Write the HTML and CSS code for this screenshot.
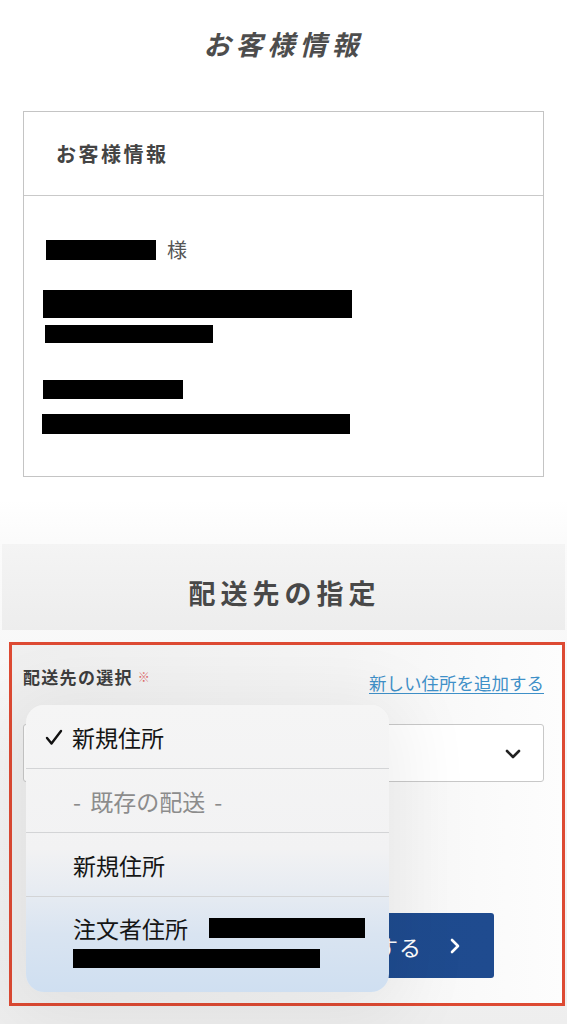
FILE: index.html
```html
<!DOCTYPE html>
<html lang="ja">
<head>
  <meta charset="UTF-8" />
  <meta name="viewport" content="width=device-width, initial-scale=1.0"/>
  <title>お客様情報</title>
  <link rel="stylesheet" href="styles.css">
</head>
<body>
  <main class="page">
    <h1 class="page-title">お客様情報</h1>

    <section class="card">
      <div class="card-head">お客様情報</div>
      <div class="card-body">
        <div class="name-row"><span class="redact r-name"></span><span class="honorific">様</span></div>
        <span class="redact r-addr1"></span>
        <span class="redact r-addr2"></span>
        <span class="redact r-tel"></span>
        <span class="redact r-mail"></span>
      </div>
    </section>

    <section class="shipping">
      <h2 class="band-title">配送先の指定</h2>

      <div class="ship-box">
        <div class="field-head">
          <span class="field-label">配送先の選択<span class="req">※</span></span>
          <a class="add-link" href="#">新しい住所を追加する</a>
        </div>

        <div class="select">
          <svg class="chev" width="16" height="10" viewBox="0 0 16 10">
            <path d="M2 2 L8 8 L14 2" fill="none" stroke="#222" stroke-width="2.6" stroke-linecap="round" stroke-linejoin="round"/>
          </svg>
        </div>

        <div class="actions">
          <button class="next-btn">
            <span>する</span>
            <svg width="12" height="18" viewBox="0 0 12 18">
              <path d="M3 3 L9 9 L3 15" fill="none" stroke="#fff" stroke-width="2.6" stroke-linecap="round" stroke-linejoin="round"/>
            </svg>
          </button>
        </div>

        <ul class="picker">
          <li class="opt checked">
            <svg class="tick" width="18" height="17" viewBox="0 0 18 17">
              <path d="M2 9 L6.5 14.5 L16 2" fill="none" stroke="#111" stroke-width="2.4" stroke-linecap="round" stroke-linejoin="round"/>
            </svg>
            新規住所
          </li>
          <li class="opt muted">- 既存の配送 -</li>
          <li class="opt">新規住所</li>
          <li class="opt multi">
            <div class="opt-line">注文者住所<span class="redact r-opt1"></span></div>
            <span class="redact r-opt2"></span>
          </li>
        </ul>
      </div>
    </section>
  </main>
</body>
</html>
```

FILE: styles.css
```css
* {
  margin: 0;
  padding: 0;
  box-sizing: border-box;
}
body {
  font-family: "Noto Sans CJK JP", "Noto Sans", sans-serif;
  background-color: #fff;
  color: #333;
  width: 567px;
  height: 1024px;
  overflow: hidden;
}
.page {
  background: linear-gradient(to bottom, #fff 0, #fff 500px, #fbfbfb 540px, #f4f4f4 800px, #eeeeee 1024px);
  min-height: 1024px;
}
.page-title {
  padding-top: 24px;
  line-height: 40px;
  font-size: 27px;
  font-weight: 700;
  font-style: italic;
  letter-spacing: 5px;
  text-align: center;
  color: #4d4d4d;
  margin-bottom: 47px;
}
.card {
  margin: 0 23px;
  border: 1px solid #c4c4c4;
  background: #fff;
}
.card-head {
  height: 84px;
  border-bottom: 1px solid #c9c9c9;
  padding-left: 32px;
  display: flex;
  align-items: center;
  font-size: 20px;
  font-weight: 700;
  letter-spacing: 2.5px;
  color: #444;
}
.card-body {
  display: flex;
  flex-direction: column;
  align-items: flex-start;
  padding: 39px 0 42px 19px;
}
.redact {
  display: block;
  background: #000;
}
.name-row {
  display: flex;
  align-items: center;
  height: 30px;
  padding-left: 3px;
}
.r-name { width: 110px; height: 20px; }
.honorific {
  font-size: 20px;
  color: #555;
  margin-left: 11px;
  line-height: 30px;
}
.r-addr1 { width: 309px; height: 28px; margin-top: 25px; }
.r-addr2 { width: 168px; height: 18px; margin-top: 7px; margin-left: 2px; }
.r-tel { width: 140px; height: 19px; margin-top: 37px; }
.r-mail { width: 308px; height: 20px; margin-top: 15px; margin-left: -1px; }

.shipping {
  margin-top: 67px;
}
.band-title {
  margin: 0 2px;
  height: 86px;
  padding-top: 29px;
  line-height: 40px;
  font-size: 27px;
  font-weight: 700;
  letter-spacing: 5px;
  padding-left: 2px;
  text-align: center;
  color: #484848;
  background: linear-gradient(to bottom, #f4f4f4, #ededed);
}
.ship-box {
  position: relative;
  margin: 12px 2px 0 9px;
  border: 3px solid #dd4a33;
  padding: 20px 18px 25px 11px;
  background: linear-gradient(to right, #efefef, #f5f5f5 60%, #fdfdfd);
}
.field-head {
  display: flex;
  justify-content: space-between;
  align-items: flex-start;
}
.field-label {
  font-size: 17px;
  font-weight: 700;
  line-height: 24px;
  letter-spacing: 1.3px;
  color: #3d3d3d;
}
.req {
  color: #e06a6a;
  font-size: 12px;
  font-weight: 400;
  margin-left: 5px;
  vertical-align: 2px;
}
.add-link {
  margin-top: 6px;
  font-size: 17.5px;
  line-height: 24px;
  color: #3f90c8;
  text-decoration: underline;
  text-underline-offset: 3px;
}
.select {
  margin-top: 29px;
  height: 58px;
  background: #fff;
  border: 1px solid #c8c8c8;
  border-radius: 3px;
  display: flex;
  align-items: center;
  justify-content: flex-end;
  padding: 0 22px 0 18px;
}
.chev {
  margin-top: 2px;
}
.actions {
  display: flex;
  justify-content: flex-end;
  margin-top: 131px;
  padding-right: 50px;
}
.next-btn {
  width: 414px;
  height: 65px;
  background: linear-gradient(to right, #1c4a8c, #1f4b8f);
  border: none;
  border-radius: 3px;
  color: #fff;
  font-family: inherit;
  font-size: 22px;
  letter-spacing: 1px;
  display: flex;
  align-items: center;
  justify-content: flex-end;
  gap: 27px;
  padding-right: 33px;
}
.picker {
  position: absolute;
  left: 14px;
  top: 60px;
  width: 363px;
  list-style: none;
  border-radius: 18px;
  overflow: hidden;
  background: linear-gradient(to bottom, #f5f5f5 0%, #f2f2f3 50%, #e6ebf2 66%, #d9e4f1 80%, #cfdff1 100%);
  box-shadow: 0 10px 70px 20px rgba(0, 0, 0, 0.06);
}
.opt {
  height: 64px;
  display: flex;
  align-items: center;
  padding-left: 47px;
  font-size: 23px;
  color: #151515;
  border-top: 1px solid #d3d4d6;
}
.opt:first-child {
  border-top: none;
  height: 63px;
  padding-left: 19px;
}
.tick {
  margin-right: 9px;
  margin-top: 1px;
}
.muted {
  color: #8c8c8c;
  word-spacing: 4px;
}
.multi {
  height: 96px;
  flex-direction: column;
  align-items: flex-start;
  justify-content: flex-start;
  padding-top: 17px;
}
.opt-line {
  display: flex;
  align-items: center;
  line-height: 28px;
}
.r-opt1 { width: 156px; height: 20px; margin-left: 21px; }
.r-opt2 { width: 247px; height: 19px; margin-top: 7px; }
```
